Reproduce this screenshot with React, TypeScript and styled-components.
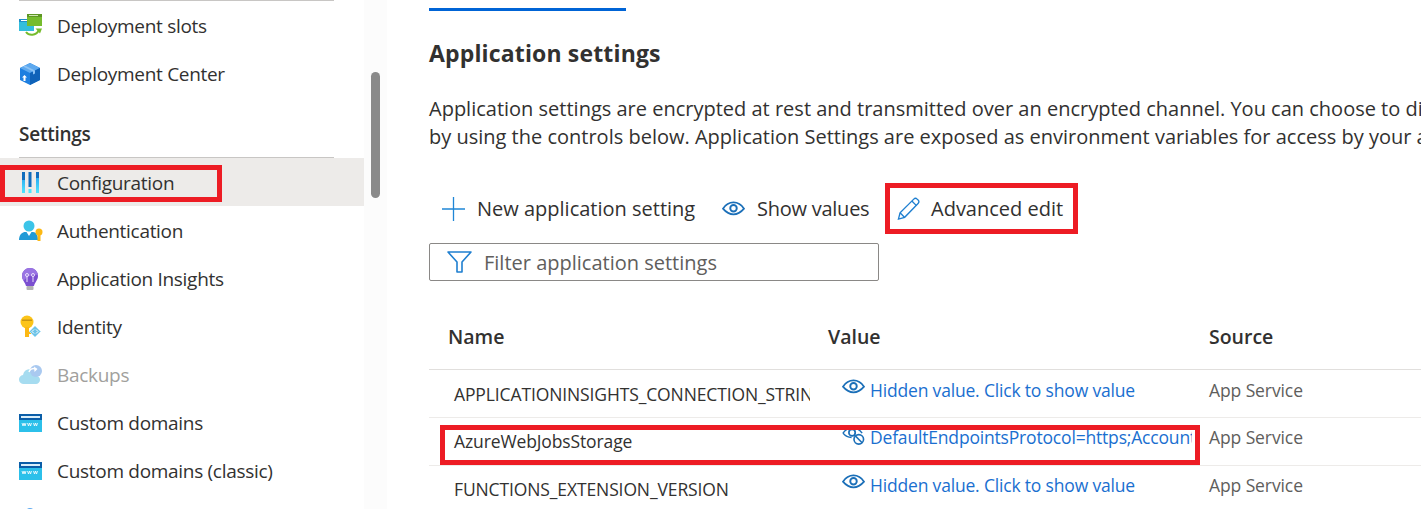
import React from 'react';
import styled, { createGlobalStyle } from 'styled-components';

const Global = createGlobalStyle`
  html, body { margin: 0; padding: 0; background: #fff; }
  body { font-family: "Open Sans", "Noto Sans", sans-serif; color: #323130; overflow: hidden; }
`;

const Page = styled.div`
  display: flex;
  width: 1421px;
  height: 509px;
  overflow: hidden;
`;

const Sidebar = styled.nav`
  width: 364px;
  flex: none;
`;

const Rule = styled.div`
  height: 1px;
  margin: 0 30px 0 19px;
  background: #c8c6c4;
`;

const Row = styled.div<{ $active?: boolean }>`
  position: relative;
  display: flex;
  align-items: center;
  height: 48px;
  padding: 2px 0 0 19px;
  box-sizing: border-box;
  background: ${(p) => (p.$active ? '#edebe9' : 'transparent')};
`;

const IconSlot = styled.span`
  display: flex;
  align-items: center;
  width: 22px;
  height: 24px;
  margin-right: 16px;
  flex: none;
  svg { flex: none; }
`;

const RowLabel = styled.span<{ $muted?: boolean }>`
  font-size: 19px;
  letter-spacing: -0.3px;
  color: ${(p) => (p.$muted ? '#a19f9d' : '#323130')};
`;

const SectionTitle = styled.div`
  height: 36px;
  padding: 24px 0 0 19px;
  font-size: 19px;
  font-weight: 600;
  letter-spacing: -0.25px;
  line-height: 26px;
`;

const Rail = styled.div`
  width: 23px;
  flex: none;
  background: #fcfcfc;
  padding-top: 72px;
  box-sizing: border-box;
`;

const Thumb = styled.div`
  width: 9px;
  height: 126px;
  margin-left: 7px;
  border-radius: 5px;
  background: #8a8a8a;
`;

const Main = styled.main`
  flex: 1;
  min-width: 0;
  padding-left: 42px;
  overflow: hidden;
`;

const TabLine = styled.div`
  width: 197px;
  height: 3px;
  margin-top: 8px;
  background: #0064d6;
`;

const Heading = styled.h2`
  margin: 26px 0 0;
  font-size: 23px;
  line-height: 32px;
  font-weight: 700;
  letter-spacing: 0.15px;
`;

const Intro = styled.p`
  margin: 26px 0 0;
  font-size: 20px;
  line-height: 28px;
  white-space: nowrap;
`;

const Toolbar = styled.div`
  display: flex;
  align-items: center;
  height: 51px;
  margin-top: 32px;
`;

const ToolButton = styled.div<{ $width: number; $pad?: number; $tight?: boolean }>`
  position: relative;
  display: flex;
  align-items: center;
  gap: 12px;
  height: 100%;
  width: ${(p) => p.$width}px;
  padding-left: ${(p) => p.$pad ?? 0}px;
  box-sizing: border-box;
  flex: none;
  font-size: 20px;
  letter-spacing: ${(p) => (p.$tight ? '-0.25px' : '0')};
  white-space: nowrap;
  svg { flex: none; }
`;

const FilterBox = styled.div`
  display: flex;
  align-items: center;
  gap: 12px;
  width: 450px;
  height: 38px;
  margin-top: 9px;
  border: 1px solid #8a8886;
  border-radius: 2px;
  box-sizing: border-box;
  padding-left: 17px;
  font-size: 20px;
  color: #605e5c;
`;

const Columns = styled.div`
  display: grid;
  grid-template-columns: 380px 381px 1fr;
  width: 992px;
`;

const HeadRow = styled(Columns)`
  height: 89px;
  padding-left: 19px;
  box-sizing: border-box;
  align-items: end;
  border-bottom: 1px solid #e1dfdd;
`;

const HeadCell = styled.div`
  font-size: 19.5px;
  font-weight: 600;
  line-height: 26px;
  padding-bottom: 19px;
`;

const DataRow = styled(Columns)`
  position: relative;
  height: 48px;
  padding-left: 19px;
  box-sizing: border-box;
  border-bottom: 1px solid #edebe9;
`;

const NameCell = styled.div<{ $top: number }>`
  margin-right: 18px;
  padding: ${(p) => p.$top}px 0 0 6px;
  font-size: 17.5px;
  line-height: 24px;
  letter-spacing: -0.12px;
  white-space: nowrap;
  overflow: hidden;
`;

const ValueCell = styled.div<{ $top: number }>`
  display: flex;
  gap: 5px;
  margin-right: 17px;
  padding: ${(p) => p.$top}px 0 0 14px;
  font-size: 17.5px;
  line-height: 24px;
  letter-spacing: -0.18px;
  color: #1a6fd0;
  white-space: nowrap;
  overflow: hidden;
  svg { flex: none; margin-top: 1px; }
`;

const ValueText = styled.span`
  min-width: 0;
  overflow: hidden;
`;

const SourceCell = styled.div<{ $top: number }>`
  padding-top: ${(p) => p.$top}px;
  font-size: 17.5px;
  line-height: 24px;
  letter-spacing: -0.1px;
  color: #605e5c;
`;

// red annotation frames drawn over the screenshot
const Frame = styled.div<{ $l: number; $t: number; $w: number; $h: number }>`
  position: absolute;
  left: ${(p) => p.$l}px;
  top: ${(p) => p.$t}px;
  width: ${(p) => p.$w}px;
  height: ${(p) => p.$h}px;
  box-sizing: border-box;
  border: 5px solid #ed1c24;
  pointer-events: none;
`;

const SlotsIcon = () => (
  <svg width="24" height="24" viewBox="0 0 24 24">
    <rect x="0" y="5" width="15" height="12" fill="#32bedd" />
    <rect x="0" y="5" width="15" height="3" fill="#1f8fc9" />
    <rect x="2" y="6" width="6" height="1" fill="#fff" />
    <rect x="8" y="0" width="15" height="12" fill="#76bc2d" />
    <rect x="8" y="0" width="15" height="3" fill="#5e9624" />
    <rect x="10" y="1" width="9" height="1" fill="#cfe8b0" />
    <path d="M7 18c3 4 10 4 13-2" fill="none" stroke="#76bc2d" strokeWidth="2" />
    <path d="M16.500 14.500h6.500l-2 5z" fill="#76bc2d" />
  </svg>
);

const BoxIcon = () => (
  <svg width="22" height="24" viewBox="0 0 22 24">
    <path d="M11 1l10 5v12l-10 5-10-5V6z" fill="#1e7fe0" />
    <path d="M11 1l10 5-10 5L1 6z" fill="#5ea9ef" />
    <path d="M11 11l10-5v12l-10 5z" fill="#0f62b8" />
    <path d="M6 3.500l10 5v3l-2 1v-3l-10-5z" fill="#8cc3f5" />
    <path d="M5.500 13l2.500 2.500H6.500V19h-2v-3.500H3z" fill="#fff" />
  </svg>
);

const ConfigIcon = () => (
  <svg width="22" height="24" viewBox="0 0 22 24">
    <defs>
      <linearGradient id="cfg" x1="0" y1="0" x2="0" y2="1">
        <stop offset="0" stopColor="#1b93eb" />
        <stop offset="1" stopColor="#50e6ff" />
      </linearGradient>
    </defs>
    <rect x="3" y="1" width="3" height="21" fill="url(#cfg)" />
    <rect x="3" y="1" width="3" height="8" fill="#0f6cbd" />
    <rect x="9.500" y="1" width="3" height="15" fill="#0f6cbd" />
    <rect x="9.500" y="18" width="3" height="4" fill="#50e6ff" />
    <rect x="17" y="1" width="3" height="21" fill="url(#cfg)" />
    <rect x="17" y="1" width="3" height="6" fill="#0f6cbd" />
  </svg>
);

const UserKeyIcon = () => (
  <svg width="24" height="22" viewBox="0 0 24 22">
    <circle cx="10" cy="6" r="5.500" fill="#3cc4e8" />
    <path d="M0 20c0-6 4-8 6-8h8c3 0 5 3 5 8z" fill="#1f9ad6" />
    <path d="M7.500 12h5L10 16z" fill="#fff" />
    <circle cx="20" cy="12" r="3.500" fill="#fcb814" />
    <rect x="18.500" y="13" width="3" height="8" fill="#fcb814" />
  </svg>
);

const BulbIcon = () => (
  <svg width="22" height="24" viewBox="0 0 22 24">
    <path d="M11 1a7.800 7.800 0 0 0-8 8c0 4 3 6 4 10h8c1-4 4-6 4-10a7.800 7.800 0 0 0-8-8z" fill="#7b4fd0" />
    <path d="M11 1a7.800 7.800 0 0 0-8 8c0 2 .8 3.500 1.700 5C8 9 14 7 19 8a8 8 0 0 0-8-7z" fill="#9a74e3" />
    <rect x="7.500" y="19" width="7" height="4" rx="1" fill="#b3b3b3" />
    <path d="M8 15V9M14 15V9" stroke="#e8defa" strokeWidth="1" fill="none" />
    <circle cx="8" cy="8" r="1.500" fill="none" stroke="#e8defa" />
    <circle cx="14" cy="8" r="1.500" fill="none" stroke="#e8defa" />
  </svg>
);

const KeyIcon = () => (
  <svg width="22" height="24" viewBox="0 0 22 24">
    <circle cx="8" cy="7" r="6.500" fill="#fcc419" />
    <rect x="3" y="4.500" width="10" height="1.500" fill="#c99612" />
    <rect x="6" y="12" width="4" height="10" fill="#fcb814" />
    <rect x="10" y="17" width="2" height="2" fill="#fcb814" />
    <path d="M16 11l5.500 5.500L16 22l-5.500-5.500z" fill="#6cc3e8" stroke="#b6e2f5" />
    <path d="M15 14.500l-2 2 2 2M17 14.500l2 2-2 2" stroke="#fff" strokeWidth="1" fill="none" />
  </svg>
);

const CloudIcon = () => (
  <svg width="24" height="22" viewBox="0 0 24 22">
    <path d="M5 20a4.500 4.500 0 0 1-1-9c1-5 5-7 9-5 3 1 4 4 4 6 3 0 4 2 4 4s-2 4-4 4z" fill="#a6dcf0" />
    <circle cx="17" cy="7" r="6" fill="#a9c9f0" />
    <path d="M10 8c1-3 4-4 7-3" stroke="#fff" strokeWidth="1.500" fill="none" />
    <path d="M15 2.500l3.500 2.500-3 3z" fill="#fff" />
  </svg>
);

const WwwIcon = () => (
  <svg width="23" height="18" viewBox="0 0 23 18">
    <rect width="23" height="18" fill="#2cc0ea" />
    <rect width="23" height="6" fill="#0b5ea8" />
    <rect x="2" y="2" width="19" height="2" fill="#d9eefa" />
    <path d="M3 9l1 3 1-3 1 3 1-3M8.500 9l1 3 1-3 1 3 1-3M14.500 9l1 3 1-3 1 3 1-3" stroke="#fff" strokeWidth=".8" fill="none" />
  </svg>
);

// only the top of this one shows above the fold
const NextRowIcon = () => (
  <svg width="22" height="24" viewBox="0 0 22 24">
    <circle cx="11" cy="6" r="5" fill="#5ea9ef" />
  </svg>
);

const PlusIcon = () => (
  <svg width="23" height="24" viewBox="0 0 23 24">
    <path d="M11.500 0v24M0 12h23" stroke="#1f86d6" strokeWidth="1.300" fill="none" />
  </svg>
);

const EyeIcon = ({ size = 23 }: { size?: number }) => (
  <svg width={size} height={(size * 16) / 24} viewBox="0 0 24 16">
    <path d="M1 8c3-4.500 7-6.500 11-6.500S20 3.500 23 8c-3 3.500-7 6-11 6S4 11.500 1 8z" stroke="#1b6fb8" strokeWidth="1.800" fill="none" />
    <circle cx="12" cy="7.500" r="3.400" fill="none" stroke="#1b6fb8" strokeWidth="2" />
  </svg>
);

const EyeOffIcon = () => (
  <svg width="23" height="20" viewBox="0 0 24 20">
    <path d="M1 7c3-4 6-5.500 10-5.500S18 3 21 7" stroke="#1b6fb8" strokeWidth="1.600" fill="none" />
    <path d="M1 7c2.500 3 6 4.500 9 4.500" stroke="#1b6fb8" strokeWidth="1.600" fill="none" />
    <circle cx="10.500" cy="6.500" r="3.300" fill="none" stroke="#1b6fb8" strokeWidth="1.800" />
    <circle cx="17.500" cy="13.500" r="5" fill="#fff" stroke="#1b6fb8" strokeWidth="1.700" />
    <path d="M14 10l7 7" stroke="#1b6fb8" strokeWidth="1.700" />
  </svg>
);

const PencilIcon = () => (
  <svg width="23" height="24" viewBox="0 0 24 24" style={{ marginRight: -1 }}>
    <path d="M1.500 22.500l1.700-6.500L17.500 1.700a2.500 2.500 0 0 1 3.500 0l1 1a2.500 2.500 0 0 1 0 3.500L8 20.700z" stroke="#1f7fd0" strokeWidth="1.400" fill="none" />
    <path d="M15.500 3.700l4.800 4.800M3.200 16l4.800 4.800" stroke="#1f7fd0" strokeWidth="1.400" fill="none" />
  </svg>
);

const FunnelIcon = () => (
  <svg width="25" height="22" viewBox="0 0 25 22">
    <path d="M1 1h23l-9 10v10h-5V11z" stroke="#1f7fd0" strokeWidth="1.600" fill="none" strokeLinejoin="round" />
  </svg>
);

const settingsRows = [
  { icon: <UserKeyIcon />, label: 'Authentication' },
  { icon: <BulbIcon />, label: 'Application Insights' },
  { icon: <KeyIcon />, label: 'Identity' },
  { icon: <CloudIcon />, label: 'Backups', muted: true },
  { icon: <WwwIcon />, label: 'Custom domains' },
  { icon: <WwwIcon />, label: 'Custom domains (classic)' },
];

const HIDDEN = 'Hidden value. Click to show value';

const App = () => {
  return (
    <Page>
      <Global />
      <Sidebar>
        <Rule />
        <Row>
          <IconSlot><SlotsIcon /></IconSlot>
          <RowLabel>Deployment slots</RowLabel>
        </Row>
        <Row>
          <IconSlot><BoxIcon /></IconSlot>
          <RowLabel>Deployment Center</RowLabel>
        </Row>
        <SectionTitle>Settings</SectionTitle>
        <Rule />
        <Row $active>
          <IconSlot><ConfigIcon /></IconSlot>
          <RowLabel>Configuration</RowLabel>
          <Frame $l={0} $t={7} $w={222} $h={37} />
        </Row>
        {settingsRows.map((row) => (
          <Row key={row.label}>
            <IconSlot>{row.icon}</IconSlot>
            <RowLabel $muted={row.muted}>{row.label}</RowLabel>
          </Row>
        ))}
        <Row>
          <IconSlot><NextRowIcon /></IconSlot>
        </Row>
      </Sidebar>
      <Rail>
        <Thumb />
      </Rail>
      <Main>
        <TabLine />
        <Heading>Application settings</Heading>
        <Intro>
          Application settings are encrypted at rest and transmitted over an encrypted channel. You can choose to display them in plain text in your browser
          <br />
          by using the controls below. Application Settings are exposed as environment variables for access by your application at runtime.
        </Intro>
        <Toolbar>
          <ToolButton $width={293} $pad={13}>
            <PlusIcon />
            New application setting
          </ToolButton>
          <ToolButton $width={163} $tight>
            <EyeIcon />
            Show values
          </ToolButton>
          <ToolButton $width={193} $pad={12}>
            <PencilIcon />
            Advanced edit
            <Frame $l={0} $t={0} $w={193} $h={51} />
          </ToolButton>
        </Toolbar>
        <FilterBox>
          <FunnelIcon />
          Filter application settings
        </FilterBox>
        <HeadRow>
          <HeadCell>Name</HeadCell>
          <HeadCell>Value</HeadCell>
          <HeadCell>Source</HeadCell>
        </HeadRow>
        <DataRow>
          <NameCell $top={12}>APPLICATIONINSIGHTS_CONNECTION_STRING</NameCell>
          <ValueCell $top={8}><EyeIcon /><ValueText>{HIDDEN}</ValueText></ValueCell>
          <SourceCell $top={8}>App Service</SourceCell>
        </DataRow>
        <DataRow>
          <NameCell $top={11}>AzureWebJobsStorage</NameCell>
          <ValueCell $top={7}><EyeOffIcon /><ValueText>DefaultEndpointsProtocol=https;AccountName=storage</ValueText></ValueCell>
          <SourceCell $top={7}>App Service</SourceCell>
          <Frame $l={11} $t={7} $w={760} $h={40} />
        </DataRow>
        <DataRow>
          <NameCell $top={11}>FUNCTIONS_EXTENSION_VERSION</NameCell>
          <ValueCell $top={7}><EyeIcon /><ValueText>{HIDDEN}</ValueText></ValueCell>
          <SourceCell $top={7}>App Service</SourceCell>
        </DataRow>
      </Main>
    </Page>
  );
};

export default App;
